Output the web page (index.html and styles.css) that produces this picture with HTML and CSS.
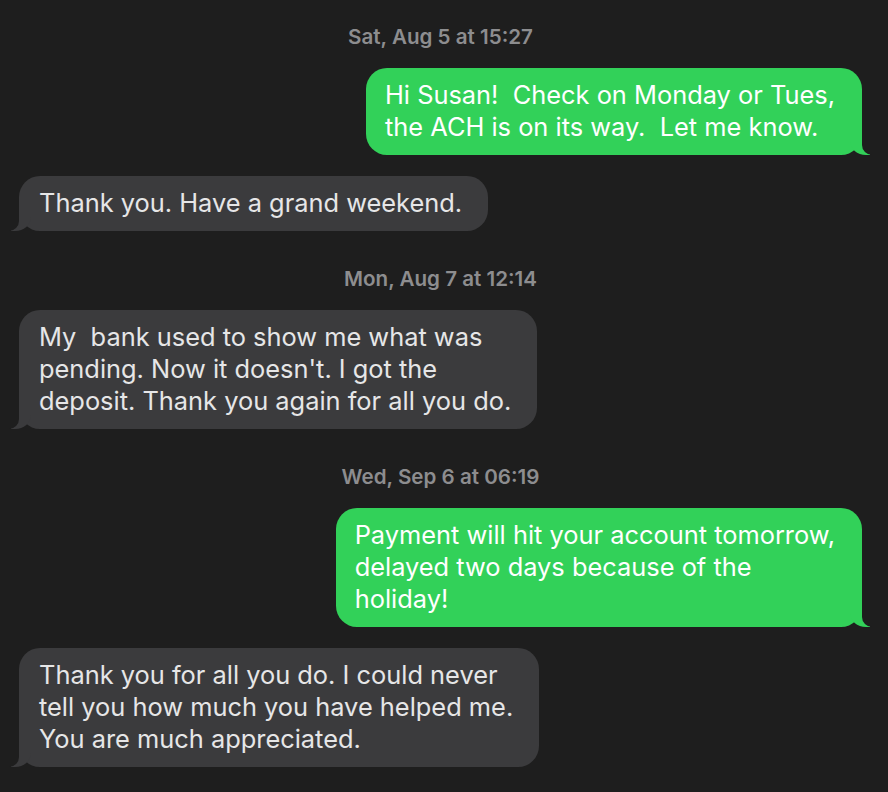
FILE: index.html
```html
<!DOCTYPE html>
<html>
<head>
<meta charset="utf-8">
<link rel="stylesheet" href="styles.css">
</head>
<body>
<div class="thread">
  <div class="stamp first">Sat, Aug 5 at 15:27</div>
  <div class="bubble sent">Hi Susan!&nbsp; Check on Monday or Tues,<br>the ACH is on its way.&nbsp; Let me know.</div>
  <div class="bubble recv">Thank you. Have a grand weekend.</div>
  <div class="stamp">Mon, Aug 7 at 12:14</div>
  <div class="bubble recv">My&nbsp; bank used to show me what was<br>pending. Now it doesn't. I got the<br>deposit. Thank you again for all you do.</div>
  <div class="stamp">Wed, Sep 6 at 06:19</div>
  <div class="bubble sent">Payment will hit your account tomorrow,<br>delayed two days because of the<br>holiday!</div>
  <div class="bubble recv">Thank you for all you do. I could never<br>tell you how much you have helped me.<br>You are much appreciated.</div>
</div>
</body>
</html>
```
FILE: styles.css
```css
html, body {
  margin: 0;
  padding: 0;
  background: #1e1e1e;
}
body {
  width: 888px;
  height: 792px;
  overflow: hidden;
}
.thread {
  display: flex;
  flex-direction: column;
  gap: 21px;
  padding: 27px 26px 0 19px;
  font-family: Inter, "Noto Sans", sans-serif;
}
.stamp {
  align-self: center;
  margin-top: 17px;
  font-size: 20.6px;
  line-height: 20px;
  font-weight: 600;
  color: #8d8d8f;
}
.stamp.first {
  margin-top: 0;
}
.bubble {
  position: relative;
  width: fit-content;
  white-space: nowrap;
  font-size: 25.4px;
  line-height: 32px;
  padding: 11px 27px 12px 19px;
  border-radius: 21px;
}
.sent {
  align-self: flex-end;
  background: #32d159;
  color: #ffffff;
}
.recv {
  align-self: flex-start;
  background: #3b3b3d;
  color: #e6e6e7;
  padding: 11px 26px 12px 20px;
}
.bubble::before,
.bubble::after {
  content: "";
  position: absolute;
  bottom: 0;
  height: 24px;
}
.sent::before {
  right: -8px;
  width: 20px;
  background: #32d159;
  border-bottom-left-radius: 16px 14px;
}
.sent::after {
  right: -26px;
  width: 26px;
  background: #1e1e1e;
  border-bottom-left-radius: 10px;
}
.recv::before {
  left: -8px;
  width: 20px;
  background: #3b3b3d;
  border-bottom-right-radius: 16px 14px;
}
.recv::after {
  left: -26px;
  width: 26px;
  background: #1e1e1e;
  border-bottom-right-radius: 10px;
}
```
